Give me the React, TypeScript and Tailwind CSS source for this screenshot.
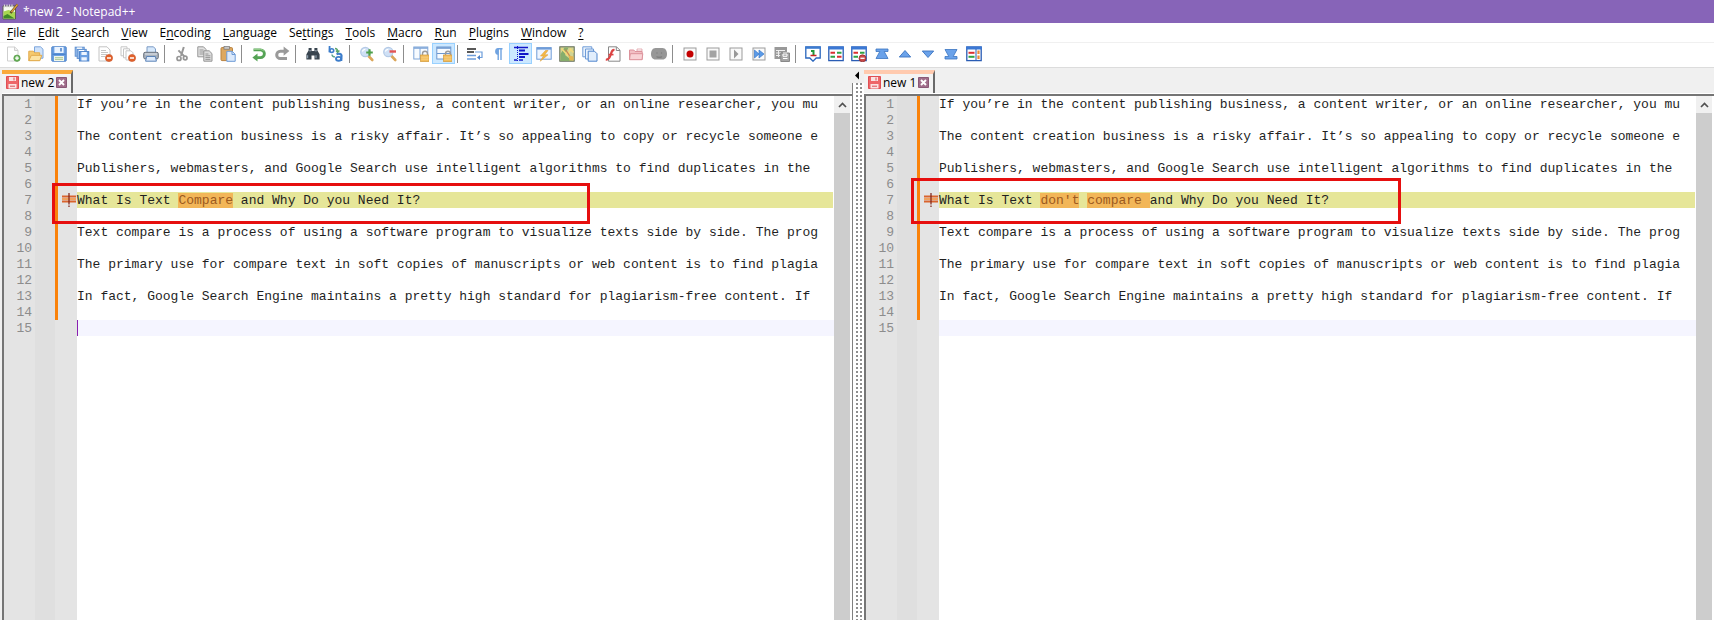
import { Fragment } from "react"
import type { ReactNode } from "react"

type IconProps = {
  children: ReactNode
}

function Icon({ children }: IconProps) {
  return (
    <svg width="16" height="16" viewBox="0 0 16 16" fill="none" aria-hidden="true">
      {children}
    </svg>
  )
}

// Shapes shared by several toolbar icons
const minusBadge = (
  <>
    <circle cx="12" cy="12" r="3.6" fill="#e2622b" stroke="#c9552c" strokeWidth=".6" />
    <path d="M10 12h4" stroke="#fff" strokeWidth="1.5" />
  </>
)

const padlock = (
  <>
    <path d="M9.5 10V7.8a2.5 2.5 0 0 1 5 0V10" stroke="#9b9b9b" strokeWidth="1.4" />
    <rect x="7.5" y="9" width="8.5" height="6.6" fill="#f3bd5c" stroke="#d29a3a" strokeWidth=".7" />
    <path d="M8.2 11.2h7.2M8.2 13.2h7.2" stroke="#fbd68c" strokeWidth=".7" />
  </>
)

const lens = (
  <>
    <path d="M9.5 10l3.8 4" stroke="#dba65a" strokeWidth="2.6" strokeLinecap="round" />
    <circle cx="6.3" cy="6" r="4.6" fill="#cfe0f5" stroke="#b4cae6" strokeWidth="1.2" />
    <path d="M3.3 5.5a3 3 0 0 1 3-2.2" stroke="#fff" strokeWidth="1.2" />
  </>
)

const macroFrame = <rect x="2" y="2" width="12" height="12" fill="#fafafa" stroke="#9b9b9b" />

const compareFrame = (
  <>
    <rect x=".8" y="1" width="14.4" height="13.6" fill="#fff" stroke="#2a5cb4" strokeWidth="1.3" />
    <path d="M.2 2h15.6" stroke="#3b78d4" strokeWidth="3" />
  </>
)

const compareLines = (
  <>
    <path d="M2.5 6.8H7M9 10.8h4.5" stroke="#dc2f2f" strokeWidth="2" />
    <path d="M2.5 10.8H7M9 6.8h4.5" stroke="#2fa344" strokeWidth="2" />
  </>
)

type Tool = {
  label: string
  active?: boolean
  icon: ReactNode
}

const toolGroups: Tool[][] = [
  [
    {
      label: "New",
      icon: (
        <>
          <path d="M2.5 1h7.3L13 4.2V15H2.5z" fill="#fff" stroke="#cfcfcf" />
          <path d="M9.5 1v3.5H13" fill="#eee" stroke="#cfcfcf" />
          <circle cx="12" cy="12.2" r="3.2" fill="#6bb35c" stroke="#4d9440" strokeWidth=".6" />
          <path d="M12 10.3v3.8M10.1 12.2h3.8" stroke="#fff" strokeWidth="1.3" />
        </>
      ),
    },
    {
      label: "Open",
      icon: (
        <>
          <path d="M6.5.8h6L15 3.2v9H6.5z" fill="#cfe2fa" stroke="#7ca6dc" />
          <path d="M.8 14.5V5.2h4.5l1.4 1.6h5v7.7z" fill="#f6ca6e" stroke="#e2a94b" />
          <path d="M.8 14.7l2.5-5.4h10.5l-2 5.4z" fill="#fce3a3" stroke="#e0a94b" />
        </>
      ),
    },
    {
      label: "Save",
      icon: (
        <>
          <rect x=".8" y=".8" width="14.4" height="14.4" rx=".6" fill="#6ca0e2" stroke="#4c82c9" />
          <rect x="3.4" y="1" width="9.2" height="6" fill="#e9f3ff" />
          <path d="M10 2v3.5" stroke="#3f77c2" strokeWidth="1.4" />
          <path d="M1.5 8.2h13" stroke="#3f77c2" />
          <rect x="3" y="10" width="10" height="5" fill="#f1f6e8" />
          <path d="M4 11.7h8M4 13.4h8" stroke="#99bb7f" strokeWidth=".8" />
        </>
      ),
    },
    {
      label: "Save all",
      icon: (
        <>
          <rect x="1.2" y="1.2" width="9" height="9" fill="#9dc1ee" stroke="#5f8fcf" />
          <path d="M3 1.5h5v2H3z" fill="#fff" />
          <rect x="3.2" y="3.4" width="9" height="9" fill="#9dc1ee" stroke="#5f8fcf" />
          <path d="M5 4h5v2H5z" fill="#fff" />
          <rect x="5.4" y="5.6" width="9.4" height="9.4" fill="#6ca0e2" stroke="#4c82c9" />
          <path d="M7.4 6h5.4v3H7.4zM7.4 11.2h5.4v3.3H7.4z" fill="#eef5ff" />
        </>
      ),
    },
    {
      label: "Close",
      icon: (
        <>
          <path d="M2 .8h8L13 4v11H2z" fill="#fff" stroke="#c4c4c4" />
          <path d="M4 4.5h5M4 6.5h7M4 8.5h6M4 10.5h4" stroke="#c6c6c6" />
          {minusBadge}
        </>
      ),
    },
    {
      label: "Close all",
      icon: (
        <>
          <path d="M1 .8h6v9H1z" fill="#fff" stroke="#c6c6c6" />
          <path d="M3.5 2.8h6v9h-6z" fill="#fff" stroke="#c6c6c6" />
          <path d="M6 4.8h5l2 2V14H6z" fill="#fff" stroke="#c6c6c6" />
          {minusBadge}
        </>
      ),
    },
    {
      label: "Print",
      icon: (
        <>
          <path d="M4 6.5V.8h6.5L12.5 3v3.5" fill="#d6e8fb" stroke="#7d9cc5" />
          <rect x=".7" y="6.3" width="14.6" height="6.6" rx="1.4" fill="#a9b2bd" stroke="#6a727d" />
          <path d="M2 8h12" stroke="#e3e7ec" />
          <path d="M3.6 10.5h8.8l1 4.7H2.6z" fill="#dceafb" stroke="#5b83b7" />
        </>
      ),
    },
  ],
  [
    {
      label: "Cut",
      icon: (
        <>
          <path d="M9.8 1L7 10M4.4 4.4l6 6" stroke="#979797" strokeWidth="2" />
          <circle cx="5" cy="12.5" r="2" stroke="#979797" strokeWidth="1.7" />
          <circle cx="11.2" cy="12" r="1.8" stroke="#979797" strokeWidth="1.7" />
        </>
      ),
    },
    {
      label: "Copy",
      icon: (
        <>
          <path d="M.8.8h5.7L9 3.4v7.4H.8z" fill="#e2e2e2" stroke="#969696" />
          <path d="M2.5 4h4M2.5 6h5M2.5 8h5" stroke="#969696" />
          <path d="M6.8 4.8h5.4L15 7.6v7.6H6.8z" fill="#dcdcdc" stroke="#969696" />
          <path d="M8.4 8h3M8.4 9.8h5M8.4 11.6h5M8.4 13.4h5" stroke="#969696" />
        </>
      ),
    },
    {
      label: "Paste",
      icon: (
        <>
          <rect x="1" y="1.6" width="11.5" height="13" rx="1" fill="#dda860" stroke="#b98340" />
          <rect x="4" y=".4" width="5.4" height="2.8" fill="#c6c6c6" stroke="#777" strokeWidth=".7" />
          <path d="M6.8 5.3h5.4l3 3v7H6.8z" fill="#dceafc" stroke="#6c9ad6" />
          <path d="M12 5.5v3h3" stroke="#6c9ad6" />
        </>
      ),
    },
  ],
  [
    {
      label: "Undo",
      icon: (
        <>
          <path d="M2.5 3.8h7a3.9 3.9 0 0 1 0 7.8H5.5" stroke="#55a355" strokeWidth="2.8" />
          <path d="M6.5 7.6v8L1.4 11.6z" fill="#55a355" />
          <path d="M3 3.4h6.5a4 4 0 0 1 3.5 2" stroke="#9dd494" strokeWidth=".9" />
        </>
      ),
    },
    {
      label: "Redo",
      icon: (
        <>
          <path d="M11 5.2H6.4a3.7 3.7 0 0 0 0 7.4h6.6" stroke="#9a9a9a" strokeWidth="3" />
          <path d="M9.6.6v9.2L15.4 5z" fill="#9a9a9a" />
        </>
      ),
    },
  ],
  [
    {
      label: "Find",
      icon: (
        <>
          <path d="M3.6 2h3v3h2.8V2h3v2.6l2.2 3.6v5.4H9.5V9.6h-3v4H1.4V8.2l2.2-3.6z" fill="#38444f" />
          <path d="M2.6 9.2v3M11 9.2v3" stroke="#8d9eae" strokeWidth="1.2" />
          <path d="M4.2 4.8h2M9.8 4.8h2" stroke="#b8c4cf" strokeWidth=".8" />
        </>
      ),
    },
    {
      label: "Replace",
      icon: (
        <>
          <path d="M1.6 0l-.2 6.4" stroke="#3c7dcb" strokeWidth="1.8" />
          <circle cx="3.8" cy="4.6" r="1.9" stroke="#3c7dcb" strokeWidth="1.6" />
          <path d="M8.5 8.3c2.2-1 5-.7 5 1.2l-.3 5.5" stroke="#3c7dcb" strokeWidth="2.2" />
          <ellipse cx="10.6" cy="12.8" rx="2.6" ry="1.9" stroke="#3c7dcb" strokeWidth="1.9" />
          <path d="M4 8.5c0 1.8 1 2.4 3 2.4" stroke="#5aa48f" strokeWidth="1.4" />
          <path d="M7 2.5c1.800 0 2.600.9 2.600 3M8 4.500l1.600 2 1.800-2" stroke="#5aa46a" strokeWidth="1.400" />
        </>
      ),
    },
  ],
  [
    {
      label: "Zoom in",
      icon: (
        <>
          {lens}
          <path d="M10.5 3.2v6.6M7.2 6.500h6.600" stroke="#4d9f4a" strokeWidth="2.200" />
        </>
      ),
    },
    {
      label: "Zoom out",
      icon: (
        <>
          {lens}
          <path d="M7.500 5.500h6.500" stroke="#e25555" strokeWidth="2.400" />
        </>
      ),
    },
  ],
  [
    {
      label: "Synchronize vertical scrolling",
      icon: (
        <>
          <rect x=".8" y="1" width="14" height="12" fill="#f7fbff" stroke="#7fa6d8" />
          <path d="M.8 2h14" stroke="#7fa6d8" strokeWidth="1.600" />
          <path d="M7 2v11" stroke="#7fa6d8" />
          {padlock}
        </>
      ),
    },
    {
      label: "Synchronize horizontal scrolling",
      active: true,
      icon: (
        <>
          <rect x=".8" y="1" width="14" height="12" fill="#f7fbff" stroke="#6c98d0" />
          <path d="M.8 2h14" stroke="#6c98d0" strokeWidth="1.600" />
          <path d="M1 7.500h14" stroke="#6c98d0" />
          {padlock}
        </>
      ),
    },
  ],
  [
    {
      label: "Word wrap",
      icon: (
        <>
          <path d="M0 3h9M0 6h7" stroke="#222" strokeWidth="1.300" />
          <path d="M0 9.500h9M0 13h9" stroke="#6c9ddb" strokeWidth="1.300" />
          <path d="M8 6h7v5.500h-3" stroke="#6c9ddb" strokeWidth="1.200" />
          <path d="M13 9v5l-3-2.500z" fill="#4b80c9" />
        </>
      ),
    },
    {
      label: "Show all characters",
      icon: (
        <>
          <path d="M7.500 2.700h5M8.200 2.500V14M11 2.500V14" stroke="#70a3e0" strokeWidth="1.400" />
          <path d="M8.500 2a3.400 3.400 0 0 0 0 6.800z" fill="#70a3e0" />
        </>
      ),
    },
    {
      label: "Show indent guide",
      active: true,
      icon: (
        <>
          <path d="M1 1.500h14M1 14h3M6 14h4" stroke="#1216c8" strokeWidth="1.500" />
          <path d="M6 4.500h6M6 8h9.500M6 11h6" stroke="#1216c8" strokeWidth="2.200" />
          <path d="M4.500 0v16" stroke="#1216c8" strokeDasharray="1 1" />
        </>
      ),
    },
    {
      label: "User defined language",
      icon: (
        <>
          <rect x=".8" y="1.600" width="14.400" height="11.600" fill="#eef5ff" stroke="#6f9cd8" />
          <path d="M.8 2.600h14.400" stroke="#6f9cd8" strokeWidth="2" />
          <path d="M9.500 4.500L4.500 10h3l-3.300 5.200L12 8.800H8.600L12 4.500z" fill="#f5b945" stroke="#dba03c" strokeWidth=".6" />
        </>
      ),
    },
    {
      label: "Document map",
      icon: (
        <>
          <rect x=".8" y=".8" width="14.400" height="14.400" fill="#d2d493" stroke="#5b6653" />
          <path d="M1.500 8l4-6.500h4L6 9l7.500 6h-12z" fill="#86ad6c" />
          <path d="M2.500 2.500l6 6.500 3-5.500 3 3" stroke="#f3d878" strokeWidth="1.700" />
          <path d="M6.500 3.500l5.500 8.500" stroke="#c98550" strokeWidth="1.300" />
          <path d="M9.500 9.500l5 1v4h-4z" fill="#e4b652" />
        </>
      ),
    },
    {
      label: "Document list",
      icon: (
        <>
          <path d="M.8.8h9v10h-9z" fill="#e9f2fd" stroke="#6f9cd8" />
          <path d="M3.500 3h8v10h-8z" fill="#e9f2fd" stroke="#6f9cd8" />
          <path d="M6.200 5.200h6.300L15 7.700v7.500H6.200z" fill="#e2eefc" stroke="#4f84cc" />
        </>
      ),
    },
    {
      label: "Function list",
      icon: (
        <>
          <path d="M3.500.8h8L15 4.200v11H3.500z" fill="#fff" stroke="#888" />
          <path d="M11.300 1v3.500H15" stroke="#888" />
          <path d="M9.500 4C6.800 3.500 6.600 6 5.600 9S3.600 14 .8 13.500" stroke="#dc4444" strokeWidth="2.200" />
          <path d="M3.500 8.600h5" stroke="#dc4444" strokeWidth="1.600" />
        </>
      ),
    },
    {
      label: "Folder as workspace",
      icon: (
        <>
          <path d="M1.500 13.500V4h4.300L7 5.500h7.200v8z" fill="#f2bfc4" stroke="#dc929b" />
          <path d="M9 3h5v2H9z" fill="#fff" stroke="#dc929b" strokeWidth=".7" />
          <path d="M1.500 13.700l.8-6h12.500l-.8 6z" fill="#f8d3d6" stroke="#dc929b" />
        </>
      ),
    },
    {
      label: "Monitoring",
      icon: (
        <>
          <path d="M4.500 2h7C14.500 2 16 5 16 8s-1.500 5.500-4.500 5.500h-7C1.500 13.500 0 11 0 8s1.500-6 4.500-6z" fill="#979797" />
          <path d="M6 7h.01M10.500 7h.01M6 10.800q2.200 1 4.500 0" stroke="#808080" strokeWidth="1.400" strokeLinecap="round" />
        </>
      ),
    },
  ],
  [
    {
      label: "Start recording",
      icon: (
        <>
          {macroFrame}
          <circle cx="8" cy="8" r="3.500" fill="#c40000" />
        </>
      ),
    },
    {
      label: "Stop recording",
      icon: (
        <>
          {macroFrame}
          <path d="M4.500 4.500h7v7h-7z" fill="#a3a3a3" />
        </>
      ),
    },
    {
      label: "Playback",
      icon: (
        <>
          {macroFrame}
          <path d="M6 3.500L10.500 8 6 12.500z" fill="#999" />
        </>
      ),
    },
    {
      label: "Run a macro multiple times",
      icon: (
        <>
          {macroFrame}
          <path d="M3.500 4v8L8 8zM8 4v8l5-4z" fill="#5b9be8" stroke="#3b78c9" strokeWidth=".7" />
        </>
      ),
    },
    {
      label: "Save recorded macro",
      icon: (
        <>
          <path d="M.5 1H13v5H9v7H.5z" fill="#999" />
          <path d="M2 4.500h9M2 7h5M2 9.500h5M4.500 4v7" stroke="#eee" />
          <path d="M6.800 7h8.700v8.500H6.800z" fill="#a5a5a5" stroke="#888" />
          <path d="M9 8h4v2.300H9zM9 12.500h4.500" stroke="#fff" />
        </>
      ),
    },
  ],
  [
    {
      label: "Set as first to compare",
      icon: (
        <>
          <path d="M.8 1h14.400v11h-4L8 15.200 4.800 12h-4z" fill="#fff" stroke="#2a66bd" strokeWidth="1.300" />
          <path d="M.2 1.700h15.600" stroke="#3c7bd0" strokeWidth="2.200" />
          <path d="M6 5h2.500v4" stroke="#20993a" strokeWidth="2" />
          <path d="M5.500 9.500h6" stroke="#c72424" strokeWidth="1.500" />
        </>
      ),
    },
    {
      label: "Compare",
      icon: (
        <>
          {compareFrame}
          {compareLines}
        </>
      ),
    },
    {
      label: "Clear active compare",
      icon: (
        <>
          {compareFrame}
          {compareLines}
          <circle cx="11.500" cy="12.300" r="3.500" fill="#c94848" stroke="#8f2525" strokeWidth=".7" />
          <path d="M9.400 12.300h4.200" stroke="#fff" strokeWidth="1.300" />
        </>
      ),
    },
    {
      label: "First difference",
      icon: (
        <path d="M2 3h12v2.500h-3.800L14 12.500H2l3.800-7H2z" fill="#6aa2ea" stroke="#3a73c0" strokeWidth=".8" />
      ),
    },
    {
      label: "Previous difference",
      icon: <path d="M8 4.500l5.700 6.500H2.300z" fill="#6aa2ea" stroke="#3a73c0" strokeWidth=".9" />,
    },
    {
      label: "Next difference",
      icon: <path d="M8 11.500L2.300 5h11.400z" fill="#6aa2ea" stroke="#3a73c0" strokeWidth=".9" />,
    },
    {
      label: "Last difference",
      icon: (
        <path d="M2 13h12v-2.500h-3.800L14 3.500H2l3.800 7H2z" fill="#6aa2ea" stroke="#3a73c0" strokeWidth=".8" />
      ),
    },
    {
      label: "Navigation bar",
      icon: (
        <>
          {compareFrame}
          <path d="M10 3v11.500" stroke="#2a5cb4" />
          <path d="M2.500 6.800h6" stroke="#dc2f2f" strokeWidth="2" />
          <path d="M2.500 10.800h6" stroke="#2fa344" strokeWidth="2" />
          <path d="M12.500 4.500V8M12.500 9.500v3.500" stroke="#ee8a35" strokeWidth="2.200" />
        </>
      ),
    },
  ],
]

// The number is the index of the underlined access key
const menus: [string, number][] = [
  ["File", 0],
  ["Edit", 0],
  ["Search", 0],
  ["View", 0],
  ["Encoding", 1],
  ["Language", 0],
  ["Settings", 2],
  ["Tools", 0],
  ["Macro", 0],
  ["Run", 0],
  ["Plugins", 0],
  ["Window", 0],
  ["?", 0],
]

function TitleBar() {
  return (
    <header className="flex h-[23px] items-center gap-1 bg-[#8764b8] px-[2px]">
      <svg width="17" height="18" viewBox="0 0 17 18" aria-hidden="true">
        <path d="M1 3h12.500v13H1z" fill="#f8faf2" stroke="#5d5d50" />
        <path d="M1.500 8.500l5-1.500 6.500 2v6.500H1.500z" fill="#a8d650" />
        <path d="M1.500 13l4-2 7 4.500h-11z" fill="#3f8a25" />
        <path d="M2.500 1.500v3M5 1.500v3M7.500 1.500v3M10 1.500v3" stroke="#d9d9d9" strokeWidth="1.200" />
        <path d="M15.500 1.500L8.500 10" stroke="#5a4524" strokeWidth="2.400" />
        <path d="M15.500 1.500L9.500 9" stroke="#e0a33b" strokeWidth="1.400" />
      </svg>
      <h1 className="text-[12px] leading-4 text-white">*new 2 - Notepad++</h1>
    </header>
  )
}

function MenuBar() {
  return (
    <nav aria-label="Main menu" className="flex h-[19px] items-center pl-px">
      {menus.map(([label, key]) => (
        <button key={label} type="button" className="px-[6px] text-[12px] leading-4 text-black">
          {label.slice(0, key)}
          <span className="underline underline-offset-2">{label[key]}</span>
          {label.slice(key + 1)}
        </button>
      ))}
    </nav>
  )
}

function ToolBar() {
  return (
    <div
      role="toolbar"
      aria-label="Tools"
      className="flex h-[26px] items-start border-t border-b border-t-[#f0f0f0] border-b-[#dcdcdc] pl-px"
    >
      {toolGroups.map((group, i) => (
        <Fragment key={i}>
          {i > 0 && <div className="mt-[2px] mr-[5px] ml-[2px] h-[18px] w-px bg-[#8d8d8d]" />}
          {group.map((tool) => (
            <button
              key={tool.label}
              type="button"
              aria-label={tool.label}
              aria-pressed={tool.active}
              className={
                tool.active
                  ? "flex h-[21px] w-[23px] items-center justify-center border border-[#99d1ff] bg-[#cce8ff]"
                  : "flex h-[21px] w-[23px] items-center justify-center"
              }
            >
              <Icon>{tool.icon}</Icon>
            </button>
          ))}
        </Fragment>
      ))}
    </div>
  )
}

type FileTabProps = {
  name: string
  focused: boolean
}

function FileTab({ name, focused }: FileTabProps) {
  return (
    <div
      className={
        focused
          ? "flex h-[23px] items-center gap-[2px] border-t-4 border-r-2 border-t-[#faaa3c] border-r-[#696969] bg-[#f3f3f3] pr-1 pb-[2px] pl-1"
          : "flex h-[23px] items-center gap-[2px] border-t-4 border-r-2 border-t-[#ffcaaf] border-r-[#696969] bg-[#f3f3f3] pr-1 pb-[2px] pl-1"
      }
    >
      <button type="button" className="flex items-center gap-[2px] text-[12px] leading-4 text-black">
        <svg width="13" height="13" viewBox="0 0 13 13" aria-hidden="true">
          <path d="M.5.5h12v12H.5z" fill="#ee6668" stroke="#e04f54" />
          <path d="M3 1h7v4H3zM2.500 8h8v4.500h-8z" fill="#fbe3e3" />
          <path d="M8 1.500v3M4 10.200h5" stroke="#d85055" />
        </svg>
        {name}
      </button>
      <button type="button" aria-label={`Close ${name}`}>
        <svg width="11" height="11" viewBox="0 0 11 11" aria-hidden="true">
          <path d="M.5.5h10v10H.5z" fill="#a06c8a" stroke="#8a5876" />
          <path d="M3 3l5 5M8 3L3 8" stroke="#fff" strokeWidth="1.900" />
        </svg>
      </button>
    </div>
  )
}

type Piece = {
  text: string
  changed?: boolean
}

type PaneProps = {
  name: string
  focused: boolean
  changedLine: Piece[]
}

function DiffMarker() {
  return (
    <svg width="14" height="16" viewBox="0 0 14 16" aria-hidden="true">
      <path d="M0 4.500h14M0 9.500h14" stroke="#d9642e" strokeWidth="1.800" />
      <path d="M0 7h14" stroke="#f09a50" strokeWidth="1.800" />
      <path d="M7 1v11.500M7 13.500v1.500" stroke="#7d2016" strokeWidth="1.200" />
    </svg>
  )
}

function EditorPane({ name, focused, changedLine }: PaneProps) {
  const lines: Piece[][] = [
    [{ text: "If you’re in the content publishing business, a content writer, or an online researcher, you mu" }],
    [],
    [{ text: "The content creation business is a risky affair. It’s so appealing to copy or recycle someone e" }],
    [],
    [{ text: "Publishers, webmasters, and Google Search use intelligent algorithms to find duplicates in the" }],
    [],
    changedLine,
    [],
    [{ text: "Text compare is a process of using a software program to visualize texts side by side. The prog" }],
    [],
    [{ text: "The primary use for compare text in soft copies of manuscripts or web content is to find plagia" }],
    [],
    [{ text: "In fact, Google Search Engine maintains a pretty high standard for plagiarism-free content. If" }],
    [],
    [],
  ]

  return (
    <section aria-label={name} className="flex min-w-0 flex-1 flex-col">
      <div className="flex h-[26px] items-start border-b border-b-white bg-[#f0f0f0] pt-[2px]">
        <FileTab name={name} focused={focused} />
      </div>

      <div className="relative flex flex-1 border-t-2 border-l-2 border-[#757575] bg-white pr-[2px]">
        <div className="relative min-w-0 flex-1 overflow-hidden bg-white">
          {/* Margins run the full height, below the last line too */}
          <div className="absolute inset-y-0 left-0 flex w-[73px] bg-[#e4e4e4]">
            <div className="ml-[31px] w-[20px] bg-[#dfdfdf]" />
          </div>

          <div className="relative font-['Liberation_Mono',monospace] text-[13px] leading-[18px]">
            {lines.map((line, i) => {
              const isChanged = i === 6
              const isCurrent = i === 14
              return (
                <div key={i} className="flex h-4">
                  <span className="w-[28px] shrink-0 text-right text-[#8c8c8c]">{i + 1}</span>
                  <span
                    className={
                      isCurrent
                        ? "ml-[23px] w-[3px] shrink-0"
                        : "ml-[23px] w-[3px] shrink-0 bg-[#fa820a]"
                    }
                  />
                  <span className="w-[19px] shrink-0 pl-1">{isChanged && <DiffMarker />}</span>
                  <span
                    className={
                      isChanged
                        ? "mr-px flex-1 whitespace-pre bg-[#e6e699] text-[#1f1f1f]"
                        : isCurrent
                          ? "flex-1 whitespace-pre bg-[#f5f5ff]"
                          : "flex-1 whitespace-pre text-[#1f1f1f]"
                    }
                  >
                    {line.map((piece, j) =>
                      piece.changed ? (
                        <mark key={j} className="bg-[#f2b658] text-[#9c5a1e]">
                          {piece.text}
                        </mark>
                      ) : (
                        <span key={j}>{piece.text}</span>
                      )
                    )}
                    {isCurrent && focused && <span className="block h-4 w-px bg-[#8a1fb0]" />}
                  </span>
                </div>
              )
            })}
          </div>
        </div>

        {/* Scrollbar */}
        <div className="flex w-4 flex-col bg-[#cdcdcd]">
          <button
            type="button"
            aria-label={`Scroll ${name} up`}
            className="flex h-[17px] items-center justify-center bg-[#f0f0f0]"
          >
            <svg width="9" height="6" viewBox="0 0 9 6" fill="none" aria-hidden="true">
              <path d="M1 5l3.500-3.500L8 5" stroke="#505050" strokeWidth="1.700" />
            </svg>
          </button>
        </div>

        {/* Red frame round the changed line */}
        <div
          className={
            focused
              ? "pointer-events-none absolute top-[87px] left-[48px] h-[41px] w-[538px] border-3 border-[#e60f0f]"
              : "pointer-events-none absolute top-[82px] left-[45px] h-[46px] w-[490px] border-3 border-[#e60f0f]"
          }
        />
      </div>
    </section>
  )
}

function Splitter() {
  return (
    <div className="flex w-3 flex-col bg-[#f0f0f0]">
      <svg width="12" height="15" viewBox="0 0 12 15" aria-hidden="true">
        <path d="M7 3.500v8L3 7.500z" fill="#000" />
      </svg>
      <div className="flex flex-1 border-l border-[#808080] bg-white pl-px">
        <div className="w-2 bg-[conic-gradient(from_90deg_at_2px_2px,#ffffff_75%,#8f8f8f_0)] bg-[length:4px_4px]" />
      </div>
    </div>
  )
}

export default function App() {
  return (
    <div className="flex min-h-screen flex-col overflow-hidden bg-white font-['Open_Sans',sans-serif]">
      <TitleBar />
      <MenuBar />
      <ToolBar />
      <main className="flex flex-1 bg-[#f0f0f0] pl-[2px]">
        <EditorPane
          name="new 2"
          focused
          changedLine={[
            { text: "What Is Text " },
            { text: "Compare", changed: true },
            { text: " and Why Do you Need It?" },
          ]}
        />
        <Splitter />
        <EditorPane
          name="new 1"
          focused={false}
          changedLine={[
            { text: "What Is Text " },
            { text: "don't", changed: true },
            { text: " " },
            { text: "compare ", changed: true },
            { text: "and Why Do you Need It?" },
          ]}
        />
      </main>
    </div>
  )
}
